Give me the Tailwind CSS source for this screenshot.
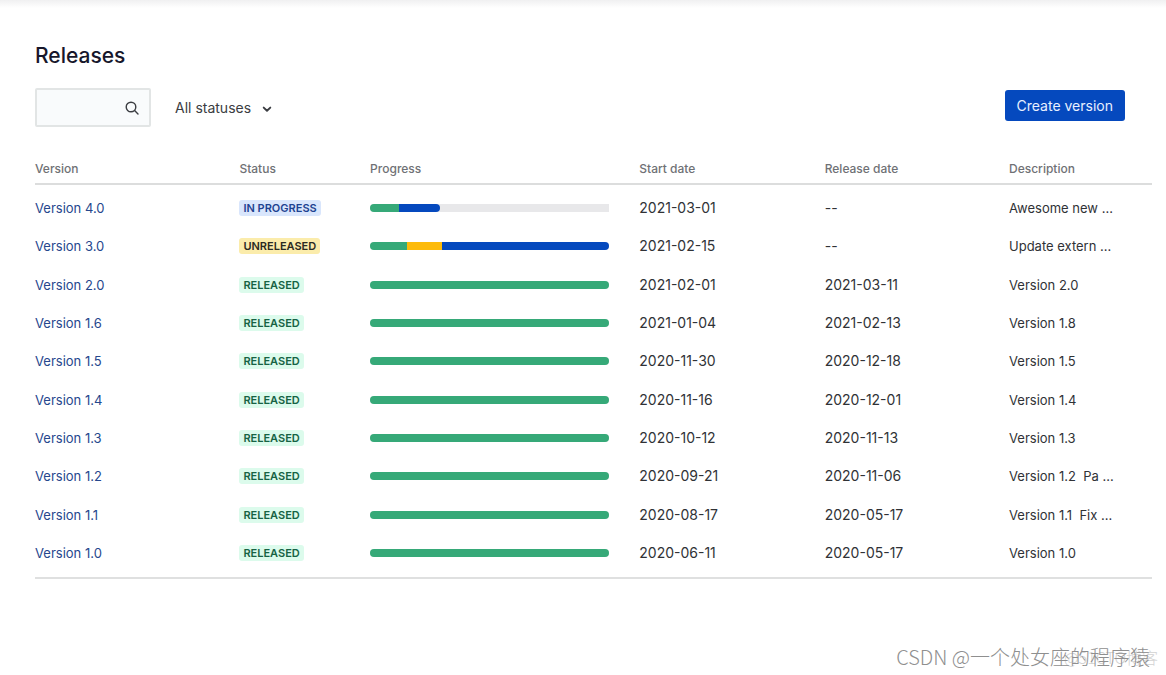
<!DOCTYPE html>
<html lang="en">

<head>
    <meta charset="UTF-8" />
    <meta name="viewport" content="width=device-width, initial-scale=1.0">
    <title>Releases</title>
    <script src="https://cdn.jsdelivr.net/npm/@tailwindcss/browser@4"></script>
</head>

<body class="bg-white text-[#303236] font-['Inter','Noto_Sans_CJK_SC',sans-serif] min-h-screen">

    <!-- Top shadow -->
    <div class="h-2 bg-linear-to-b from-[#f0f0f1] to-white"></div>

    <main class="pl-[35px] pr-[14px] pt-8">
        <h1 class="text-[21px] leading-8 font-medium text-[#17172b]">Releases</h1>

        <!-- Toolbar -->
        <div class="mt-4 flex items-center pr-[27px]">
            <label class="relative block">
                <span class="sr-only">Search versions</span>
                <input type="search" class="block w-[116px] h-[39px] pl-2 pr-8 text-sm border-2 border-[#e2e5e5] bg-[#f9fbfc] rounded-xs outline-none focus:border-[#0549be]" />
                <svg class="absolute right-3 top-[13px] size-[14px] text-[#3b3d42]" viewBox="0 0 14 14" fill="none" stroke="currentColor" stroke-width="1.4" stroke-linecap="round">
                    <circle cx="6" cy="6" r="4.8" />
                    <path d="M9.6 9.6 13 13" />
                </svg>
            </label>
            <div class="relative ml-6">
                <select aria-label="Status" class="block appearance-none bg-transparent pr-6 text-[14px] leading-5 font-normal text-[#3b3d42]">
                    <option>All statuses</option>
                </select>
                <svg class="absolute right-1 top-1.5 size-[10px] pointer-events-none text-[#3b3d42]" viewBox="0 0 10 10" fill="none" stroke="currentColor" stroke-width="1.9" stroke-linecap="round" stroke-linejoin="round">
                    <path d="M1.7 3.6 5 6.8 8.3 3.6" />
                </svg>
            </div>
            <button class="ml-auto mb-1 h-[31px] px-3 rounded-[3px] bg-[#0549be] hover:bg-[#0b5ad9] text-[14px] text-[#e8f0ff]">Create version</button>
        </div>

        <!-- Versions -->
        <div class="mt-6 pb-[5px] border-b-2 border-[#dfe0e0]">
            <table class="w-full table-fixed text-left text-[13px] leading-5">
                <thead class="text-[12px] text-[#6f7175] border-b-2 border-[#dcdddd]">
                    <tr class="h-[33px] *:pt-[3px]">
                        <th class="w-[18.3%] font-medium">Version</th>
                        <th class="w-[11.7%] font-medium">Status</th>
                        <th class="w-[24.1%] font-medium">Progress</th>
                        <th class="w-[16.6%] font-medium">Start date</th>
                        <th class="w-[16.5%] font-medium">Release date</th>
                        <th class="font-medium">Description</th>
                    </tr>
                </thead>
                <tbody id="versions" class="before:block before:h-1"></tbody>
            </table>
        </div>
    </main>

    <!-- Watermark -->
    <footer class="absolute right-4 bottom-1 text-[20px] leading-7 text-[#8f8f8f] font-['Noto_Sans_CJK_SC',sans-serif] font-light whitespace-nowrap">
        <span class="absolute -right-2 top-0 text-base leading-7 text-[#d2d2d2]">@51CTO博客</span>
        <span class="relative">CSDN @一个处女座的程序猿</span>
    </footer>

    <script>
        const badges = {
            'IN PROGRESS': 'bg-[#d9e6fc] text-[#1f4391]',
            'UNRELEASED': 'bg-[#fbecab] text-[#2b2a22]',
            'RELEASED': 'bg-[#dcfbec] text-[#176344]',
        };

        const green = 'bg-[#36a978]';
        const yellow = 'bg-[#fdbb0b]';
        const blue = 'bg-[#0549be]';
        const done = [[green, 100]];

        const versions = [
            ['4.0', 'IN PROGRESS', [[green, 12.2], [blue, 17]], '2021-03-01', '--', 'Awesome new ...'],
            ['3.0', 'UNRELEASED', [[green, 15.6], [yellow, 14.3], [blue, 70.1]], '2021-02-15', '--', 'Update extern ...'],
            ['2.0', 'RELEASED', done, '2021-02-01', '2021-03-11', 'Version 2.0'],
            ['1.6', 'RELEASED', done, '2021-01-04', '2021-02-13', 'Version 1.8'],
            ['1.5', 'RELEASED', done, '2020-11-30', '2020-12-18', 'Version 1.5'],
            ['1.4', 'RELEASED', done, '2020-11-16', '2020-12-01', 'Version 1.4'],
            ['1.3', 'RELEASED', done, '2020-10-12', '2020-11-13', 'Version 1.3'],
            ['1.2', 'RELEASED', done, '2020-09-21', '2020-11-06', 'Version 1.2  Pa ...'],
            ['1.1', 'RELEASED', done, '2020-08-17', '2020-05-17', 'Version 1.1  Fix ...'],
            ['1.0', 'RELEASED', done, '2020-06-11', '2020-05-17', 'Version 1.0'],
        ];

        document.getElementById('versions').innerHTML = versions.map(([name, status, parts, start, release, description]) => `
            <tr class="h-[38px] nth-[3n]:h-[39px]">
                <td><a href="#" class="text-[#26478d] hover:underline">Version ${name}</a></td>
                <td><span class="block w-fit px-1 rounded-[3px] text-[11px] leading-4 font-semibold ${badges[status]}">${status}</span></td>
                <td>
                    <div class="mr-[30px] h-2 rounded-l-full bg-[#e8e8ea] ${status === 'IN PROGRESS' ? '' : 'rounded-r-full'}">
                        <div class="flex h-2 rounded-full overflow-hidden" style="width: ${parts.reduce((sum, part) => sum + part[1], 0)}%">
                            ${parts.map(([color, share]) => `<div class="${color}" style="flex: ${share}"></div>`).join('')}
                        </div>
                    </div>
                </td>
                <td class="text-[14px]">${start}</td>
                <td class="text-[14px]">${release}</td>
                <td class="whitespace-pre">${description}</td>
            </tr>
        `).join('');
    </script>
</body>

</html>
